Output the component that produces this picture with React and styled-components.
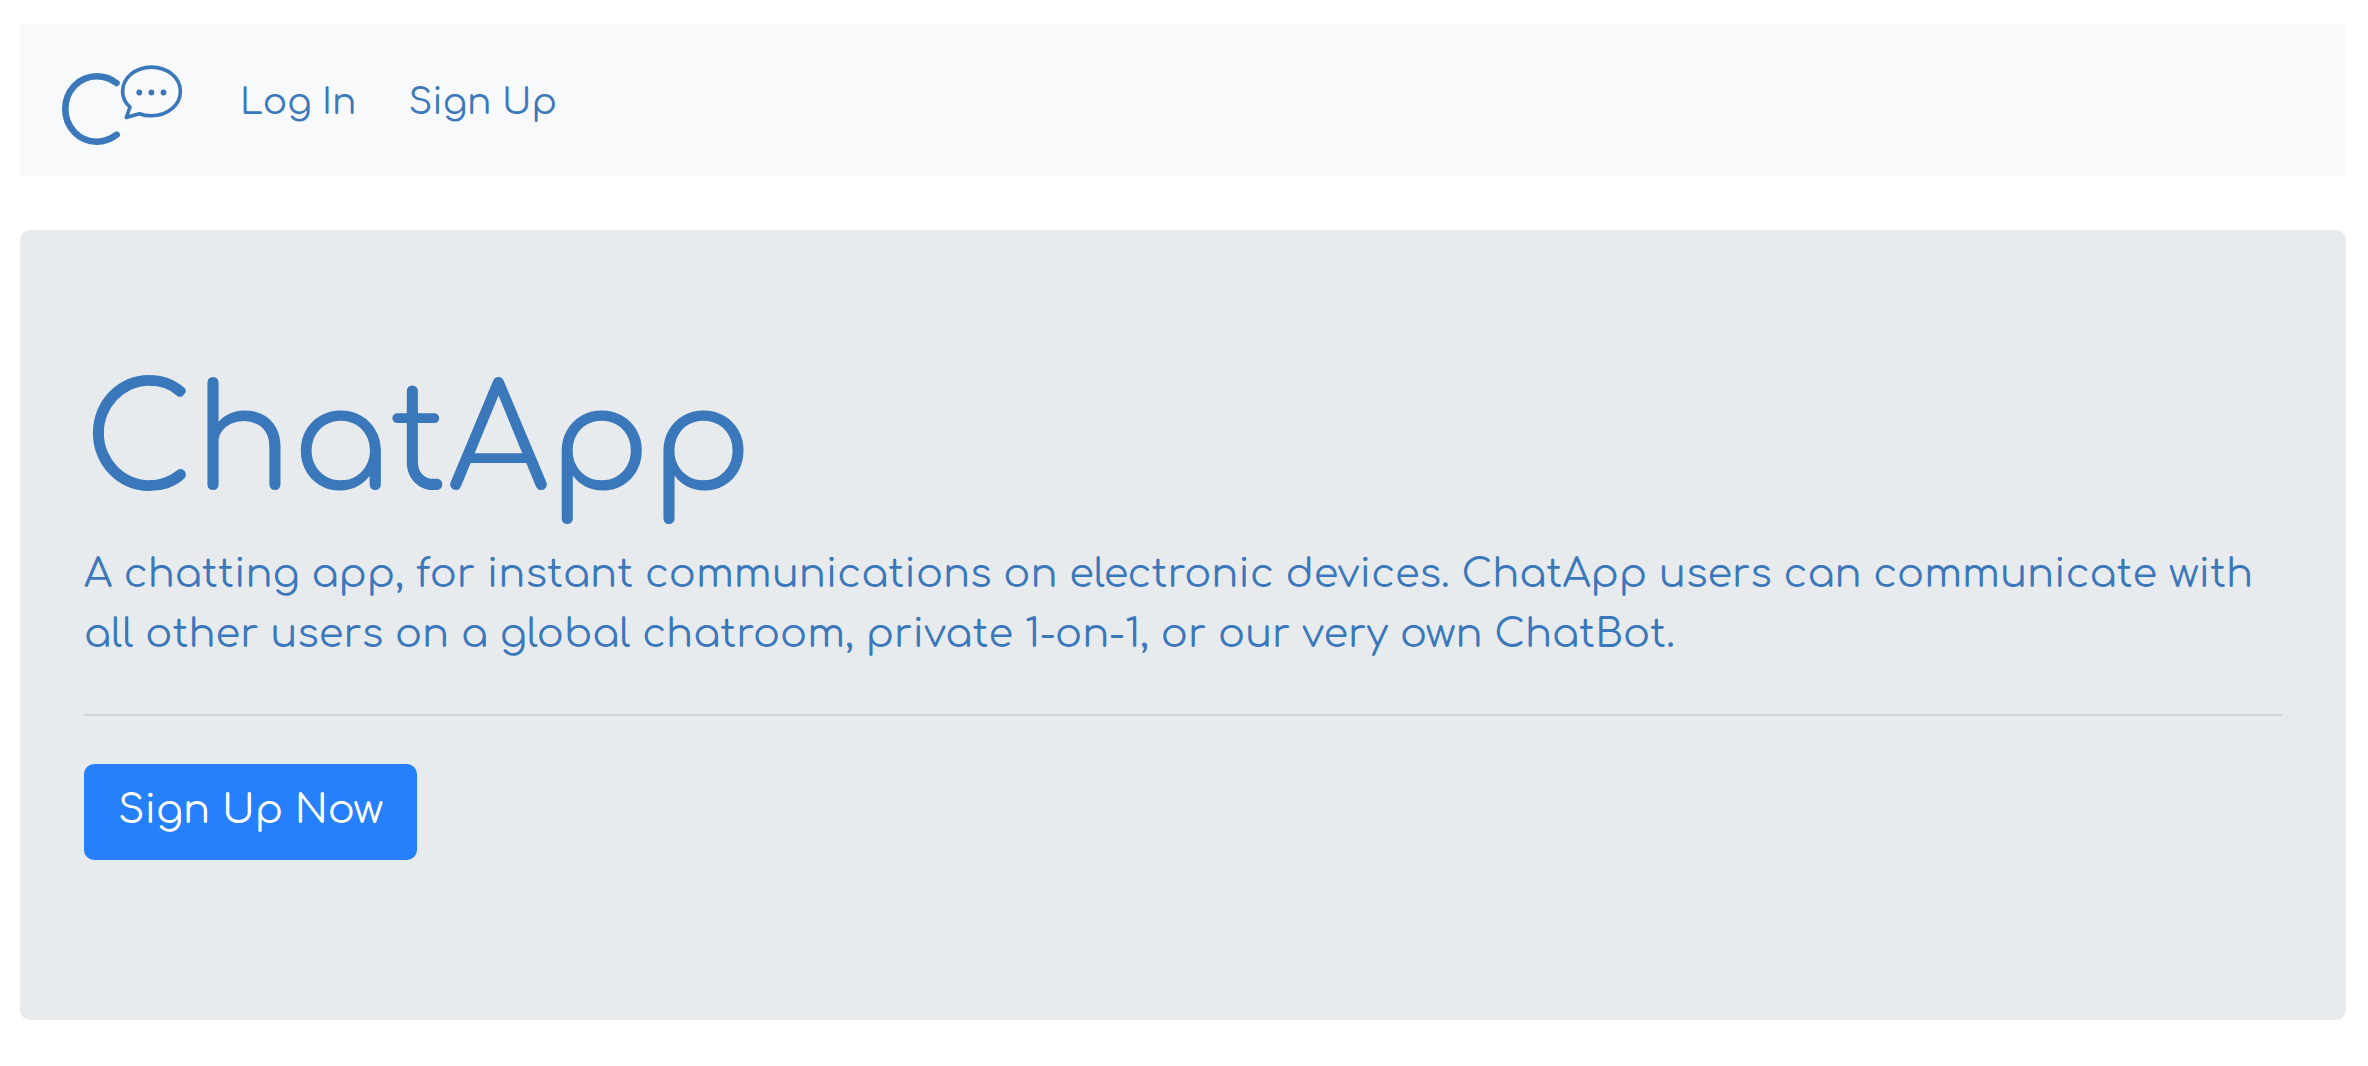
import React from "react";
import styled, { createGlobalStyle } from "styled-components";

const BLUE = "#3a78bb";

const GlobalStyle = createGlobalStyle`
  *, *::before, *::after { box-sizing: border-box; }
  body {
    margin: 0;
    background: #fff;
    color: ${BLUE};
    font-family: Comfortaa, Lato, sans-serif;
    font-size: 40px;
    line-height: 60px;
  }
`;

const Page = styled.div`
  display: flex;
  flex-direction: column;
  gap: 54px;
  padding: 24px 22px 46px 20px;
`;

const Navbar = styled.nav`
  display: flex;
  align-items: center;
  gap: 52px;
  padding: 28px 32px;
  background: #f8f9fb;
`;

const Brand = styled.a`
  display: flex;
`;

const Logo = styled.svg`
  display: block;
  width: 136px;
  height: 96px;
  fill: none;
  stroke: ${BLUE};
  stroke-linecap: round;
  stroke-linejoin: round;
`;

const NavLinks = styled.div`
  display: flex;
  gap: 52px;
  padding-top: 4px;
`;

const NavLink = styled.a`
  color: ${BLUE};
  font-size: 36px;
  line-height: 60px;
  text-decoration: none;
`;

const Hero = styled.main`
  padding: 128px 64px 160px;
  border-radius: 10px;
  background: #e8ebee;
`;

const Title = styled.h1`
  margin: 0 0 14px;
  font-size: 144px;
  font-weight: 400;
  line-height: 172px;
`;

const Lead = styled.p`
  margin: 0;
`;

const Divider = styled.hr`
  height: 2px;
  margin: 50px 0 48px;
  border: 0;
  background: #d0d4d7;
`;

const SignUpButton = styled.button`
  display: block;
  padding: 16px 34px 20px;
  border: 0;
  border-radius: 10px;
  background: #267ffb;
  color: #fff;
  font: inherit;
  cursor: pointer;
`;

export default function App() {
  return (
    <>
      <GlobalStyle />
      <Page>
        <Navbar>
          <Brand href="#" aria-label="ChatApp home">
            <Logo viewBox="0 0 136 96" aria-hidden="true">
              <path
                strokeWidth="6.6"
                d="M64.5 31C59 26.800 52 24.200 44.700 24.200C27.300 24.200 13.300 38.700 13.300 57C13.300 75.300 27.300 89.700 44.700 89.700C52 89.700 59 87 64.700 82.700"
              />
              <path
                strokeWidth="3.6"
                d="M78 55C73.200 50.800 70.600 45.500 70.600 39.500C70.600 26 83.500 15.100 99.500 15.100C115.500 15.100 128.400 26 128.400 39.500C128.400 53 115.500 63.800 99.500 63.800C95.200 63.800 91 63.100 87.300 61.700L74.300 65.500Z"
              />
              <g fill={BLUE} stroke="none">
                <circle cx="87.300" cy="40.500" r="2.900" />
                <circle cx="99.400" cy="40.500" r="2.900" />
                <circle cx="111.500" cy="40.500" r="2.900" />
              </g>
            </Logo>
          </Brand>
          <NavLinks>
            <NavLink href="#login">Log In</NavLink>
            <NavLink href="#signup">Sign Up</NavLink>
          </NavLinks>
        </Navbar>
        <Hero>
          <Title>ChatApp</Title>
          <Lead>
            A chatting app, for instant communications on electronic devices. ChatApp users can
            communicate with all other users on a global chatroom, private 1-on-1, or our very own
            ChatBot.
          </Lead>
          <Divider />
          <SignUpButton type="button">Sign Up Now</SignUpButton>
        </Hero>
      </Page>
    </>
  );
}
